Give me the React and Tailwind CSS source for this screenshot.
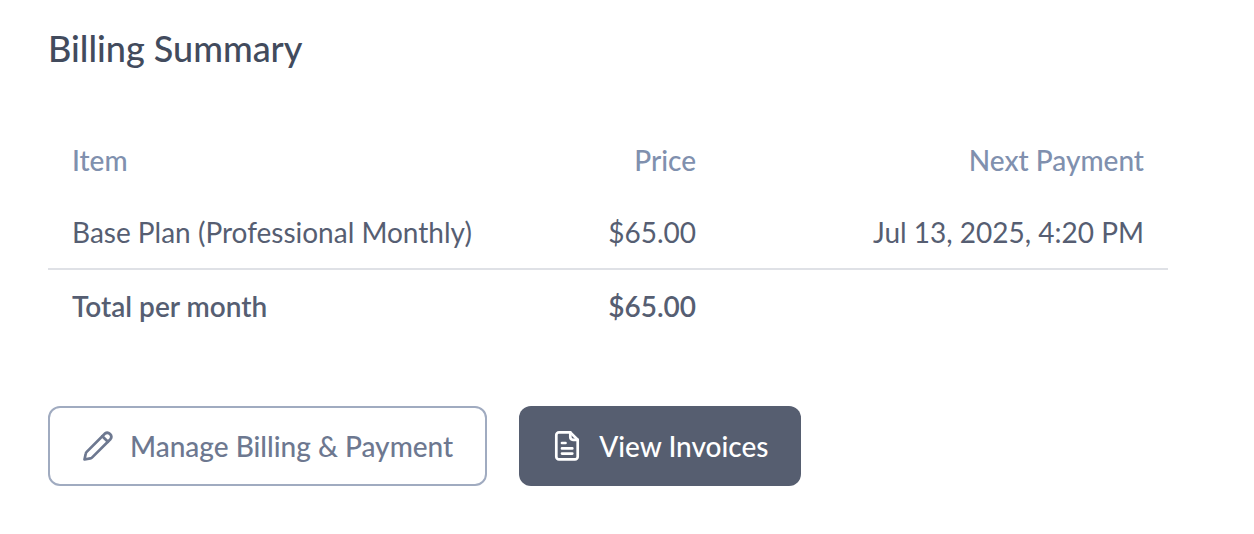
export default function App() {
  return (
    <main className="bg-white px-12 pt-7 pb-12 font-['Lato_Medium','Lato',sans-serif] text-[28px] leading-10 text-[#565e72]">
      <h1 className="text-4xl leading-10 font-medium text-[#424b5d]">Billing Summary</h1>
      <table className="mt-14 w-full max-w-[1120px] table-fixed border-separate border-spacing-0">
        <thead>
          <tr className="h-18 text-[#8090ae]">
            <th scope="col" className="w-[42%] px-6 text-left font-medium">Item</th>
            <th scope="col" className="w-[18%] px-6 text-right font-medium">Price</th>
            <th scope="col" className="w-[40%] px-6 text-right font-medium">Next Payment</th>
          </tr>
        </thead>
        <tbody className="font-['Lato',sans-serif]">
          <tr className="h-[74px]">
            <td className="border-b-2 border-[#dfe1e6] px-6 whitespace-nowrap">Base Plan (Professional Monthly)</td>
            <td className="border-b-2 border-[#dfe1e6] px-6 text-right">$65.00</td>
            <td className="border-b-2 border-[#dfe1e6] px-6 text-right whitespace-nowrap">Jul 13, 2025, 4:20 PM</td>
          </tr>
        </tbody>
        <tfoot className="font-['Lato_Semibold','Lato',sans-serif]">
          <tr className="h-18 font-semibold">
            <th scope="row" className="px-6 text-left">Total per month</th>
            <td className="px-6 text-right">$65.00</td>
            <td></td>
          </tr>
        </tfoot>
      </table>
      <div className="mt-16 flex flex-wrap gap-8">
        <button type="button" className="flex h-20 items-center gap-4 rounded-xl border-2 border-[#a0abc0] px-8 font-medium text-[#6d7890]">
          <svg className="size-8" viewBox="0 0 32 32" fill="none" stroke="currentColor" strokeWidth="2.7" strokeLinecap="round" strokeLinejoin="round" aria-hidden="true">
            <path d="m2.5 29.5 1.2-5.7a3.6 3.6 0 0 1 1-1.9L22.8 3.7a4 4 0 0 1 5.6 5.6L10.2 27.4a3.6 3.6 0 0 1-1.9 1Z" />
            <path d="m20.3 6.2 5.6 5.6" />
          </svg>
          Manage Billing &amp; Payment
        </button>
        <button type="button" className="flex h-20 items-center gap-4 rounded-xl bg-[#565e70] px-8 font-medium text-white">
          <svg className="size-8" viewBox="0 0 32 32" fill="none" stroke="currentColor" strokeWidth="2.7" strokeLinecap="round" strokeLinejoin="round" aria-hidden="true">
            <path d="M19.3 2.4H8a2.7 2.7 0 0 0-2.7 2.7v21.6A2.7 2.7 0 0 0 8 29.4h16a2.7 2.7 0 0 0 2.7-2.7V9.8Z" />
            <path d="M19.3 2.4v4.7A2.7 2.7 0 0 0 22 9.8h4.7M11 13h3.5M11 18.4h10.3M11 23.6h10.3" />
          </svg>
          View Invoices
        </button>
      </div>
    </main>
  );
}
